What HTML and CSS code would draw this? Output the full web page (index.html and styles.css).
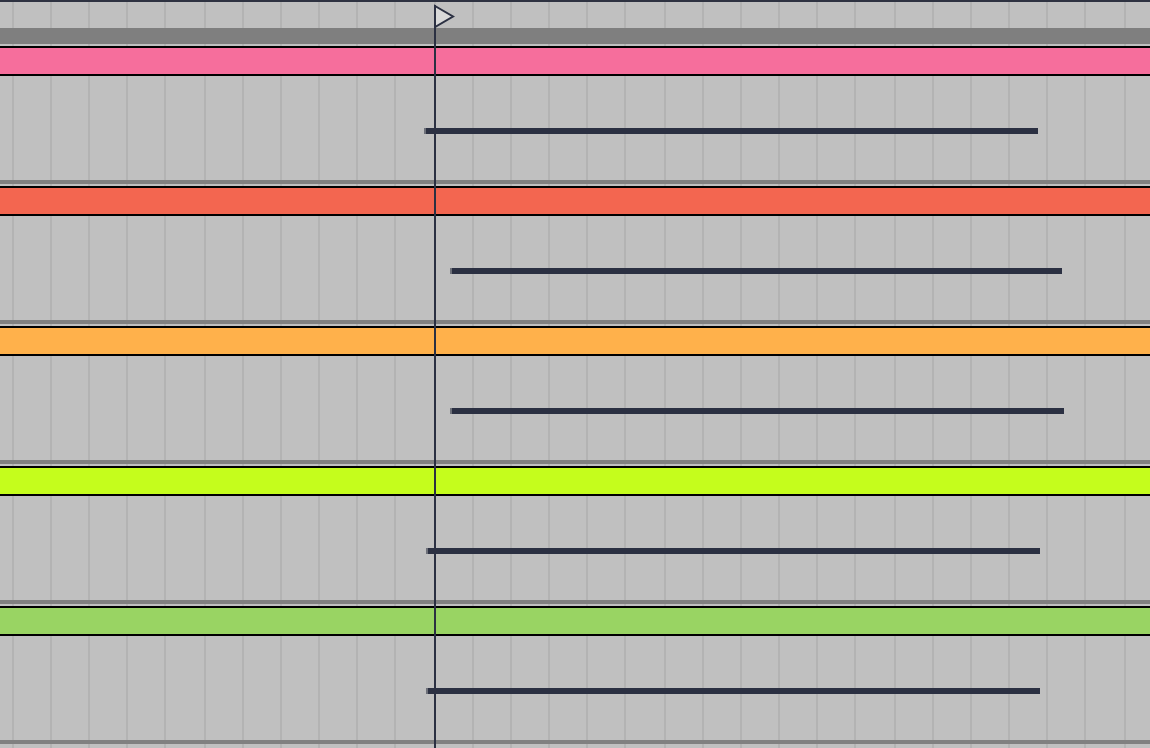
FILE: index.html
```html
<!DOCTYPE html>
<html>
<head>
<meta charset="utf-8">
<link rel="stylesheet" href="styles.css">
</head>
<body>
<div class="arrange">
  <div class="topline"></div>
  <div class="ruler"></div>
  <div class="master"></div>
  <div class="gap"></div>

  <div class="track">
    <div class="clip pink"></div>
    <div class="lane"><div class="note" style="margin-left:424px;width:614px"></div></div>
    <div class="sep"></div>
    <div class="gap"></div>
  </div>
  <div class="track">
    <div class="clip red"></div>
    <div class="lane"><div class="note" style="margin-left:450px;width:612px"></div></div>
    <div class="sep"></div>
    <div class="gap"></div>
  </div>
  <div class="track">
    <div class="clip orange"></div>
    <div class="lane"><div class="note" style="margin-left:450px;width:614px"></div></div>
    <div class="sep"></div>
    <div class="gap"></div>
  </div>
  <div class="track">
    <div class="clip lime"></div>
    <div class="lane"><div class="note" style="margin-left:426px;width:614px"></div></div>
    <div class="sep"></div>
    <div class="gap"></div>
  </div>
  <div class="track">
    <div class="clip green"></div>
    <div class="lane"><div class="note" style="margin-left:426px;width:614px"></div></div>
    <div class="sep"></div>
    <div class="gap"></div>
  </div>

  <div class="playhead"></div>
  <svg class="flag" width="24" height="26" viewBox="0 0 24 26">
    <polygon points="2,2 20,12.5 2,23" fill="#d9d9d9" stroke="#2b3042" stroke-width="2" stroke-linejoin="miter"/>
  </svg>
</div>
</body>
</html>
```

FILE: styles.css
```css
html, body {
  margin: 0;
  padding: 0;
}

body {
  width: 1150px;
  height: 748px;
  overflow: hidden;
  background: #c0c0c0;
  font-family: "Liberation Sans", Arial, sans-serif;
}

.arrange {
  position: relative;
  width: 1150px;
  height: 748px;
  display: flex;
  flex-direction: column;
  background-color: #c0c0c0;
  background-image: linear-gradient(to right,
    #b3b3b3 0 2px, transparent 2px 38px,
    #b3b3b3 38px 40px, transparent 40px 76px,
    #b3b3b3 76px 78px, transparent 78px 114px,
    #b3b3b3 114px 116px, transparent 116px 152px,
    #b3b3b3 152px 154px, transparent 154px 190px,
    #b3b3b3 190px 192px, transparent 192px 230px);
  background-size: 230px 100%;
  background-position: 204px 0;
  background-repeat: repeat-x;
}

.topline {
  height: 2px;
  flex: none;
  background: #2e3241;
}

.ruler {
  height: 26px;
  flex: none;
}

.master {
  height: 16px;
  flex: none;
  background: #7f7f7f;
}

.gap {
  height: 2px;
  flex: none;
}

.track {
  display: flex;
  flex-direction: column;
  flex: none;
}

.clip {
  height: 26px;
  border-top: 2px solid #000;
  border-bottom: 2px solid #000;
}

.pink { background: #f66e9c; }
.red { background: #f36650; }
.orange { background: #ffb14b; }
.lime { background: #c5fd1c; }
.green { background: #99d463; }

.lane {
  height: 104px;
  box-sizing: border-box;
  padding-top: 52px;
}

.note {
  height: 6px;
  box-sizing: border-box;
  background: #2b3042;
  border-left: 2px solid #6d7079;
}

.sep {
  height: 4px;
  background: #808080;
}

.playhead {
  position: absolute;
  left: 434px;
  top: 5px;
  width: 2px;
  bottom: 0;
  background: #2b3042;
}

.flag {
  position: absolute;
  left: 433px;
  top: 4px;
  display: block;
}
```
